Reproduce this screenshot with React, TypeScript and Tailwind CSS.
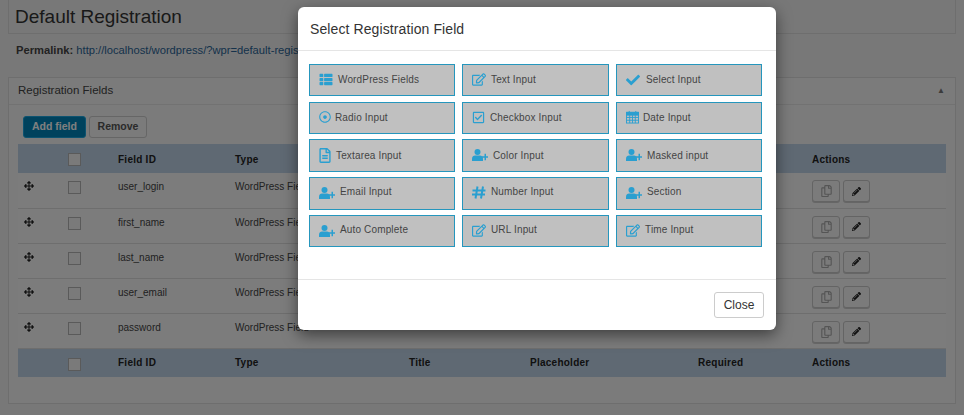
import { FaThList, FaRegEdit, FaCheck, FaRegDotCircle, FaRegCheckSquare, FaRegFileAlt, FaArrowsAlt, FaRegCopy, FaPencilAlt } from 'react-icons/fa'
import type { ComponentType } from 'react'

const fields = ['user_login', 'first_name', 'last_name', 'user_email', 'password']

function UserPlus({ className }: { className?: string }) {
  return (
    <svg viewBox="0 0 16 12" fill="currentColor" className={className}>
      <circle cx="5.5" cy="3" r="3" />
      <path d="M0 12V9.5C0 7.5 1.5 6.5 3 6.5h5c1.5 0 3 1 3 3V12z" />
      <path d="M10 7.2h2.5V4.7h1.5v2.5H16v1.5h-2v2.5h-1.5V8.7H10z" />
    </svg>
  )
}

function Calendar({ className }: { className?: string }) {
  return (
    <svg viewBox="0 0 14 14" className={className} fill="none" stroke="currentColor" strokeWidth="1">
      <rect x="0.5" y="2" width="13" height="11.5" />
      <path d="M0.5 2h13v3h-13z" fill="currentColor" />
      <path d="M3.5 0.5v2M10.5 0.5v2M0.5 7.5h13M0.5 10.5h13M4 5v8.5M7 5v8.5M10 5v8.5" />
    </svg>
  )
}

function Hash({ className }: { className?: string }) {
  return (
    <svg viewBox="0 0 14 13" className={className} fill="none" stroke="currentColor" strokeWidth="2">
      <path d="M5.5 0.5L3.5 12.5M11 0.5L9 12.5M0.5 4.5h13M0 8.5h13" />
    </svg>
  )
}

type Icon = ComponentType<{ className?: string }>

const choices: { label: string; icon: Icon; size: string; ml: string }[] = [
  { label: 'WordPress Fields', icon: FaThList, size: 'h-[13px] w-[14px]', ml: 'ml-[4px]' },
  { label: 'Text Input', icon: FaRegEdit, size: 'h-[13px] w-[14px]', ml: 'ml-[4px]' },
  { label: 'Select Input', icon: FaCheck, size: 'h-[14px] w-[14px]', ml: 'ml-[5px]' },
  { label: 'Radio Input', icon: FaRegDotCircle, size: 'h-[12px] w-[12px]', ml: 'ml-[1px]' },
  { label: 'Checkbox Input', icon: FaRegCheckSquare, size: 'h-[13px] w-[13px]', ml: 'ml-[3px]' },
  { label: 'Date Input', icon: Calendar, size: 'h-[14px] w-[13px]', ml: 'ml-[2px]' },
  { label: 'Textarea Input', icon: FaRegFileAlt, size: 'h-[15px] w-[12px]', ml: 'ml-[2px]' },
  { label: 'Color Input', icon: UserPlus, size: 'h-[12px] w-[16px]', ml: 'ml-[6px]' },
  { label: 'Masked input', icon: UserPlus, size: 'h-[12px] w-[16px]', ml: 'ml-[6px]' },
  { label: 'Email Input', icon: UserPlus, size: 'h-[12px] w-[16px]', ml: 'ml-[6px]' },
  { label: 'Number Input', icon: Hash, size: 'h-[13px] w-[14px]', ml: 'ml-[4px]' },
  { label: 'Section', icon: UserPlus, size: 'h-[12px] w-[16px]', ml: 'ml-[6px]' },
  { label: 'Auto Complete', icon: UserPlus, size: 'h-[12px] w-[16px]', ml: 'ml-[6px]' },
  { label: 'URL Input', icon: FaRegEdit, size: 'h-[13px] w-[14px]', ml: 'ml-[4px]' },
  { label: 'Time Input', icon: FaRegEdit, size: 'h-[13px] w-[14px]', ml: 'ml-[4px]' },
]

function Check() {
  return <span className="block h-[13px] w-[13px] border border-[#b4b4b4] bg-[#f4f4f4]" />
}

function HeadRow({ low }: { low?: boolean }) {
  return (
    <tr className={low ? 'h-[29px] bg-[#bfd3e6] text-left font-bold tracking-[0.25px] text-[#222]' : 'h-[29px] bg-[#bfd3e6] text-left font-bold tracking-[0.25px] text-[#222] [&>th]:pt-[2px]'}>
      <th className="w-[50px]" />
      <th className={low ? 'w-[50px] pt-[4px]' : 'w-[50px]'}><Check /></th>
      <th className="w-[117px]">Field ID</th>
      <th className="w-[174px]">Type</th>
      <th className="w-[121px]">Title</th>
      <th className="w-[168px]">Placeholder</th>
      <th className="w-[114px]">Required</th>
      <th>Actions</th>
    </tr>
  )
}

export default function App() {
  return (
    <div className="relative h-[415px] w-[964px] overflow-hidden bg-[#f1f1f1] font-['Liberation_Sans',Arial,sans-serif] text-[#444]">
      {/* page behind the modal */}
      <div className="px-2">
        <div className="h-[34px] border border-t-0 border-[#ddd] bg-[#f1f1f1] pl-[6px] text-[19px] leading-[33px] text-[#333]">
          Default Registration
        </div>
        <div className="mt-[9px] pl-2 text-[11.2px] leading-[15px]">
          <b>Permalink:</b> <a className="text-[#2a6496]">http://localhost/wordpress/?wpr=default-registration</a>
        </div>
        <section className="mt-[19px] h-[327px] border border-[#ddd] bg-[#f6f6f6]">
          <div className="flex h-[27px] items-center justify-between border-b border-[#e5e5e5] pl-[9px] pr-[10px] text-[11.5px]">
            <span>Registration Fields</span>
            <span className="text-[8px] text-[#777]">▲</span>
          </div>
          <div className="px-[9px]">
            <div className="flex gap-[3px] pl-[5px] pt-[11px] text-[10.5px] font-bold">
              <button className="h-[22px] w-[63px] rounded-[3px] border border-[#1aa7e0] bg-[#0085ba] text-white">Add field</button>
              <button className="h-[22px] w-[58px] rounded-[3px] border border-[#ccc] bg-[#f7f7f7] text-[#555]">Remove</button>
            </div>
            <table className="mt-[6px] w-full border-collapse text-[10px]">
              <thead><HeadRow /></thead>
              <tbody>
                {fields.map(name => (
                  <tr key={name} className="h-[35px] border-b border-[#dcdcdc] bg-[#f9f9f9] align-top">
                    <td className="pl-[6px] pt-[8px]"><FaArrowsAlt className="h-[10px] w-[10px] text-[#222]" /></td>
                    <td className="pt-[8px]"><Check /></td>
                    <td className="pt-[6px]">{name}</td>
                    <td className="pt-[6px]">WordPress Field</td>
                    <td />
                    <td />
                    <td />
                    <td className="pt-[7px]">
                      <div className="flex gap-[3px]">
                        <button className="grid h-[22px] w-[28px] place-items-center rounded-[3px] border border-[#c8c8c8] bg-[#f7f7f7] shadow-[0_1px_0_#ccc]"><FaRegCopy className="h-[12px] w-[11px] text-[#aaa]" /></button>
                        <button className="grid h-[22px] w-[27px] place-items-center rounded-[3px] border border-[#c8c8c8] bg-[#f7f7f7] shadow-[0_1px_0_#ccc]"><FaPencilAlt className="h-[9px] w-[9px] text-[#222]" /></button>
                      </div>
                    </td>
                  </tr>
                ))}
              </tbody>
              <tfoot><HeadRow low /></tfoot>
            </table>
          </div>
        </section>
      </div>

      {/* modal */}
      <div className="absolute inset-0 bg-black/50 pl-[298px] pt-[7px]">
        <div className="h-[323px] w-[478px] rounded-[6px] bg-white shadow-[0_5px_15px_rgba(0,0,0,0.5)]">
          <div className="flex h-[44px] items-center border-b border-[#e5e5e5] pl-[12px] pt-[1px] text-[14px] tracking-[0.1px] text-[#333]">
            Select Registration Field
          </div>
          <div className="grid h-[228px] grid-cols-[146px_147px_146px] content-start gap-x-[7px] gap-y-[5.45px] pl-[11px] pt-[13px]">
            {choices.map(({ label, icon: Icon, size, ml }, i) => (
              <button key={label} className="flex h-[32.3px] items-center border border-[#2596bd] bg-[#c0c0c0] pl-[9px] text-[10px] tracking-[0.15px] text-[#444]">
                <span className="flex w-[15px] shrink-0 items-center pb-[1px]">
                  <Icon className={`${size} shrink-0 text-[#2a9fd0]`} />
                </span>
                <span className={`${ml} ${i < 9 ? 'pb-[1px]' : 'pb-[3px]'}`}>{label}</span>
              </button>
            ))}
          </div>
          <div className="flex h-[51px] items-center justify-end border-t border-[#e5e5e5] pr-[12px]">
            <button className="h-[26px] w-[50px] rounded-[3px] border border-[#ccc] bg-white text-[12px] text-[#333]">Close</button>
          </div>
        </div>
      </div>
    </div>
  )
}
